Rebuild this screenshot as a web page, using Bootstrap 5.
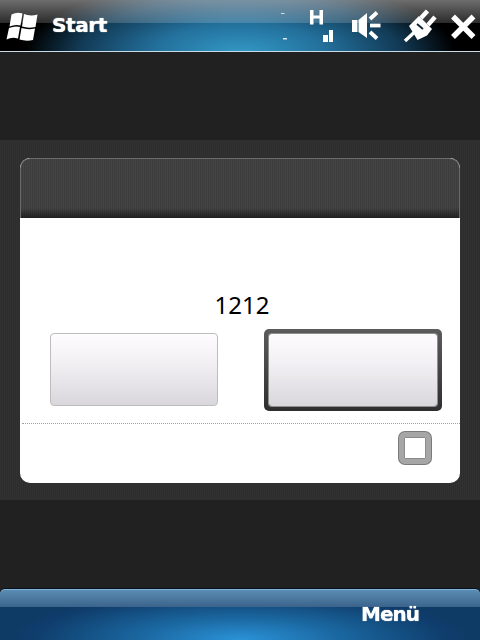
<!DOCTYPE html>
<html lang="de">
<head>
<meta charset="utf-8">
<title>Start</title>
<link rel="stylesheet" href="https://cdn.jsdelivr.net/npm/bootstrap@5.3.0/dist/css/bootstrap.min.css">
<style>
html,body{height:640px;overflow:hidden}
body{background:#212121;font-family:"DejaVu Sans",sans-serif}
.wm-top{height:52px;color:#fff;border-bottom:1px solid #c9dbe6;
 background:linear-gradient(180deg,rgba(255,255,255,.43) 0,rgba(255,255,255,.17) 23px,rgba(255,255,255,0) 23px),
 radial-gradient(ellipse 215px 75px at 50% 105%,#3399c6 0,#23709c 40%,#123a55 75%,#000 100%),#000}
.wm-top svg{display:block;height:52px;flex:none}
.wm-title{font-weight:700;font-size:20px;line-height:20px;margin-left:12px;margin-top:-1px;letter-spacing:-.4px;text-shadow:0 0 1px #fff}
.wm-gap-sig{margin-left:17px}
.wm-gap-spk{margin-left:15px}
.wm-gap-plug{margin-left:21px}
.wm-gap-x{margin-left:11px}
.wm-band{margin-top:88px;height:360px;padding:18px 20px 17px;
 background:repeating-linear-gradient(90deg,#313131 0 1px,#2d2d2d 1px 2px)}
.wm-card{height:325px;border-radius:10px;overflow:hidden;background:#fff}
.wm-head{height:60px;border:1px solid #6a6a6a;border-bottom:0;border-radius:10px 10px 0 0;
 background:linear-gradient(180deg,rgba(0,0,0,0) 83%,rgba(0,0,0,.5) 100%),
 repeating-linear-gradient(90deg,#454545 0 1px,#3c3c3c 1px 2px)}
.wm-num{padding-top:71px;height:103px;font-family:"Noto Sans",sans-serif;font-size:24px;line-height:32px;color:#000;text-align:center;padding-left:4px}
.wm-btns{height:82px;margin-top:8px;padding-left:30px;padding-right:18px}
.wm-fill{background:linear-gradient(180deg,#fffcff 0,#f2f0f3 40%,#d9d7dc 100%)}
.wm-btn{padding:0;border-radius:4px}
.wm-btn-plain{width:168px;height:73px;border:1px solid #bdbdbd;margin-top:4px}
.wm-btn-plain:hover{border-color:#bdbdbd}
.wm-btn-focus{width:178px;height:82px;padding:5px;border:0;border-radius:5px;background:linear-gradient(180deg,#5c5c5c 0,#2e2e2e 100%)}
.wm-inner{display:block;height:100%;border-radius:3px;box-shadow:0 0 0 1px #8f8f8f}
.wm-rule{margin:12px 0 0 2px;border-top:1px dotted #a0a0a0;height:8px}
.wm-foot{padding-right:29px;padding-top:1px}
.wm-check.form-check-input{width:32px;height:32px;margin:0;float:none;border:5px solid #a6a6a6;border-radius:6px;background:#fff;
 box-shadow:0 0 0 1px #7b7b7b,inset 0 0 0 1px #8a8a8a}
.wm-bottom{position:fixed;left:0;right:0;bottom:0;height:51px;color:#fff;border-radius:5px 5px 0 0;border-top:1px solid #7fb2d6;box-shadow:0 -1px 0 #06121f;
 background:linear-gradient(180deg,#5b8db3 0,#3b638b 17px,rgba(255,255,255,0) 17px),
 radial-gradient(ellipse 230px 50px at 50% 100%,#2b93d8 0,#1a669f 45%,#0f3d6c 90%,#0e3a66 100%)}
.wm-menu{font-weight:700;font-size:20px;line-height:24px;width:120px;text-align:center;margin-right:30px;letter-spacing:-1px;padding-top:12px;text-shadow:0 0 1px #fff}
</style>
</head>
<body>
<header class="wm-top d-flex align-items-center">
 <svg class="ms-1" width="36" viewBox="4 0 36 52" aria-hidden="true"><g fill="#fff">
  <path d="M11.500 14.500 Q17 11.500 22.500 13.500 L20.500 25.500 Q15 24 9.500 26.500Z"/><path d="M24 14 Q30 16.500 37.500 14.500 L35.500 27 Q28 28.500 22 26.500Z"/>
  <path d="M9 28 Q15 25.500 20 27 L18 38.500 Q12 36.500 6.500 39.500Z"/><path d="M21.500 28 Q28 30 35 28.500 L33 40 Q26 41.500 19.500 39.500Z"/></g></svg>
 <span class="wm-title">Start</span>
 <div class="ms-auto d-flex">
  <svg width="10" viewBox="280 0 10 52" aria-hidden="true"><rect x="281" y="13" width="3.500" height="1" fill="#cfe0ea"/><rect x="283" y="38" width="4" height="1.500" fill="#dbe8f0"/></svg>
  <svg class="wm-gap-sig" width="29" viewBox="307 0 29 52" aria-hidden="true"><g fill="#fff">
   <path d="M310 10h3.500v5.500h6V10h3.500v14.500h-3.500v-6h-6v6H310Z"/>
   <rect x="323" y="35" width="5" height="7"/><rect x="329" y="30" width="4" height="12"/></g></svg>
  <svg class="wm-gap-spk" width="31" viewBox="351 0 31 52" aria-hidden="true"><g fill="#fff">
   <path d="M352 20h5.500v12H352Z"/><path d="M358.500 20l8.500-7v25l-8.500-6Z"/></g>
   <g stroke="#fff" stroke-width="3.800" fill="none"><path d="M370 19l7-6.500"/><path d="M370 25.500h10.500"/><path d="M370 32l7 6.500"/></g></svg>
  <svg class="wm-gap-plug" width="36" viewBox="403 0 36 52" aria-hidden="true"><path fill="#fff" d="M409 26l10-10 13 13-5 6.500-9.500 4.500Z"/>
   <g stroke="#fff" fill="none"><path stroke-width="3.400" d="M405 41l9-8.500"/><path stroke-width="4.400" d="M421 18l6.500-7"/><path stroke-width="4.400" d="M428 25l7-8"/></g>
   <path stroke="#0a2030" stroke-width="1.800" d="M417 24l6 5" fill="none"/></svg>
  <svg class="wm-gap-x me-1" width="26" viewBox="450 0 26 52" aria-hidden="true"><path d="M453 16.500l20.500 20.500M473.500 16.500l-20.500 20.500" stroke="#fff" stroke-width="5.500" fill="none"/></svg>
 </div>
</header>
<main class="wm-band">
 <section class="wm-card">
  <div class="wm-head"></div>
  <div class="wm-num">1212</div>
  <div class="wm-btns d-flex justify-content-between align-items-start">
   <button type="button" class="btn wm-btn wm-btn-plain wm-fill" aria-label="Links"></button>
   <button type="button" class="btn wm-btn wm-btn-focus" aria-label="Rechts"><span class="wm-inner wm-fill"></span></button>
  </div>
  <div class="wm-rule"></div>
  <div class="wm-foot d-flex justify-content-end"><input class="form-check-input wm-check" type="checkbox" aria-label="Option"></div>
 </section>
</main>
<footer class="wm-bottom d-flex justify-content-end"><span class="wm-menu">Menü</span></footer>
</body>
</html>
